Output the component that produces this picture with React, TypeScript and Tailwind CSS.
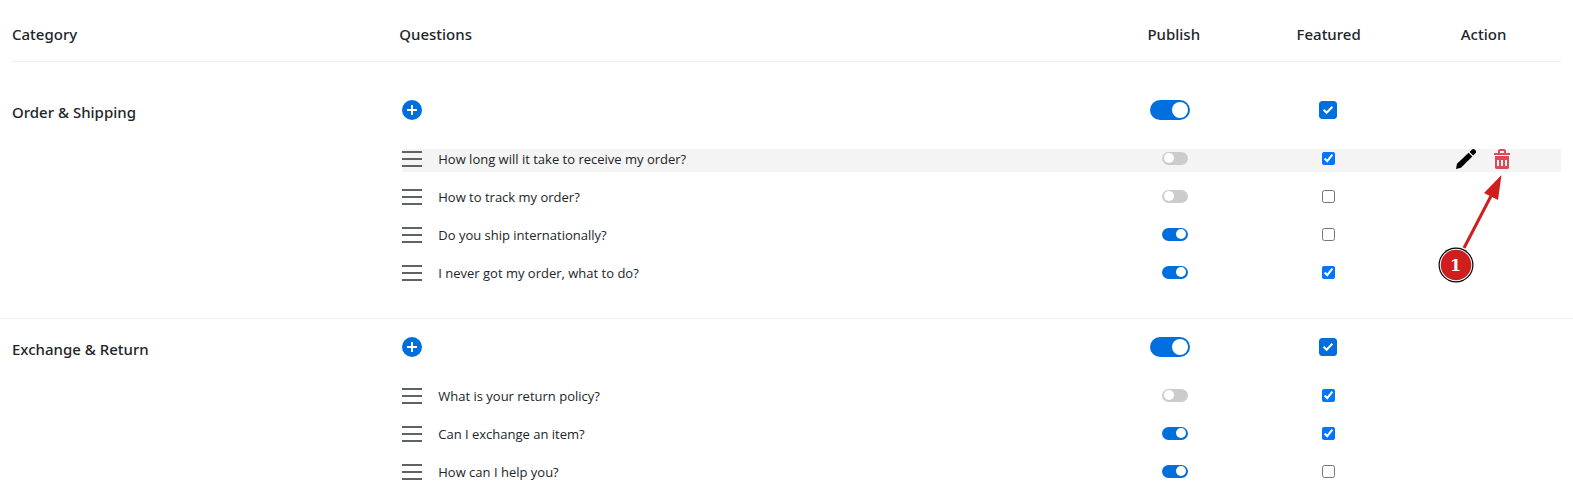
import { useState } from "react";
import clsx from "clsx";

interface Question {
  text: string;
  published: boolean;
  featured: boolean;
  active?: boolean;
}

interface Category {
  name: string;
  questions: Question[];
}

const categories: Category[] = [
  {
    name: "Order & Shipping",
    questions: [
      {
        text: "How long will it take to receive my order?",
        published: false,
        featured: true,
        active: true,
      },
      { text: "How to track my order?", published: false, featured: false },
      { text: "Do you ship internationally?", published: true, featured: false },
      {
        text: "I never got my order, what to do?",
        published: true,
        featured: true,
      },
    ],
  },
  {
    name: "Exchange & Return",
    questions: [
      { text: "What is your return policy?", published: false, featured: true },
      { text: "Can I exchange an item?", published: true, featured: true },
      { text: "How can I help you?", published: true, featured: false },
    ],
  },
];

function PlusIcon() {
  return (
    <svg viewBox="0 0 20 20" className="block h-5 w-5">
      <circle cx="10" cy="10" r="10" fill="#006fde" />
      <path d="M10 5v10M5 10h10" stroke="#fff" strokeWidth="2" />
    </svg>
  );
}

function DragIcon() {
  return (
    <svg viewBox="0 0 20 16" className="block h-4 w-5">
      <path
        d="M0 1h20M0 8h20M0 15h20"
        stroke="#5f6368"
        strokeWidth="2"
        fill="none"
      />
    </svg>
  );
}

function PencilIcon() {
  return (
    <svg viewBox="0 0 20 20" className="block h-5 w-5">
      <path d="M0 20l1-5.200L12.600 3.800l3.700 3.700L5 18.700z" />
      <path d="M13.600 2.900L15.800.7a2.200 2.200 0 0 1 3 0l.6.6a2 2 0 0 1 0 2.900l-2.200 2.200z" />
    </svg>
  );
}

function TrashIcon() {
  return (
    <svg viewBox="0 0 16 20" className="block h-5 w-4">
      <path
        fill="#dc4a56"
        fillRule="evenodd"
        d="M0 4h4V1.500L5.500 0h5L12 1.500V4h4v2H0zM6 2v2h4V2zM1 7h14v12l-1 1H2l-1-1zM3 11v6h2v-6zM7 11v6h2v-6zM11 11v6h2v-6z"
      />
    </svg>
  );
}

function Toggle({
  label,
  initial,
  large,
}: {
  label: string;
  initial: boolean;
  large?: boolean;
}) {
  const [on, setOn] = useState(initial);

  return (
    <button
      type="button"
      role="switch"
      aria-checked={on}
      aria-label={label}
      onClick={() => setOn(!on)}
      className={clsx(
        "flex shrink-0 rounded-full",
        large ? "h-5 w-10 px-0.5 pt-0.5" : "h-[13px] w-[26px] px-0.5 pt-px",
        on ? "justify-end bg-[#006fde]" : "justify-start bg-[#cccccc]",
      )}
    >
      <span
        className={clsx(
          "rounded-full bg-white",
          large ? "h-4 w-4" : "h-[10px] w-[10px]",
        )}
      />
    </button>
  );
}

function LargeCheckbox({ label }: { label: string }) {
  const [checked, setChecked] = useState(true);

  return (
    <span className="relative mt-px block h-[18px] w-[18px]">
      <input
        type="checkbox"
        aria-label={label}
        checked={checked}
        onChange={() => setChecked(!checked)}
        className="block h-[18px] w-[18px] appearance-none rounded-[3px] border border-[#006fde] checked:bg-[#006fde]"
      />
      {checked && (
        <svg
          viewBox="0 0 18 18"
          className="pointer-events-none absolute inset-0 h-[18px] w-[18px]"
        >
          <path
            d="M4.600 8.800l3 3 5.800-6"
            stroke="#fff"
            strokeWidth="2"
            fill="none"
          />
        </svg>
      )}
    </span>
  );
}

function StepMarker() {
  return (
    <div className="pointer-events-none absolute top-[25px] -left-[56px] h-[110px] w-[68px]">
      <svg viewBox="0 0 68 110" className="h-[110px] w-[68px]">
        <path d="M26 74L53 22" stroke="#d01e1e" strokeWidth="3" />
        <path d="M63.500 1L46 19l14 7z" fill="#d01e1e" />
        <circle cx="18" cy="91" r="17.500" fill="#000" />
        <circle cx="18" cy="91" r="16.300" fill="#fff" />
        <circle cx="18" cy="91" r="15.300" fill="#d01e1e" />
      </svg>
      <span className="absolute top-[74px] left-0 w-9 text-center font-['DejaVu_Serif',serif] text-base leading-9 font-bold text-white">
        1
      </span>
    </div>
  );
}

function QuestionRow({ question }: { question: Question }) {
  const [featured, setFeatured] = useState(question.featured);
  const cell = clsx("flex h-[23px]", question.active && "bg-[#f4f4f4]");

  return (
    <tr>
      <td />
      <td className="p-0 pb-[15px] pl-[3px]">
        <div className={clsx(cell, "items-center gap-4 pb-[3px]")}>
          <button type="button" aria-label="Reorder question">
            <DragIcon />
          </button>
          <span className="font-['Open_Sans',sans-serif] text-[13px] leading-5">
            {question.text}
          </span>
        </div>
      </td>
      <td className="p-0 pb-[15px]">
        <div className={clsx(cell, "justify-center pt-[3px] pl-0.5")}>
          <Toggle
            label={`Publish: ${question.text}`}
            initial={question.published}
          />
        </div>
      </td>
      <td className="p-0 pb-[15px]">
        <div className={clsx(cell, "justify-center pt-[3px]")}>
          <input
            type="checkbox"
            aria-label={`Featured: ${question.text}`}
            checked={featured}
            onChange={() => setFeatured(!featured)}
            className="h-[13px] w-[13px] accent-[#0075ff]"
          />
        </div>
      </td>
      <td className="p-0 pb-[15px]">
        <div
          className={clsx(cell, "items-start justify-center gap-[18px] pr-0.5")}
        >
          {question.active && (
            <>
              <button type="button" aria-label="Edit question">
                <PencilIcon />
              </button>
              <div className="relative">
                <button type="button" aria-label="Delete question">
                  <TrashIcon />
                </button>
                <StepMarker />
              </div>
            </>
          )}
        </div>
      </td>
    </tr>
  );
}

export default function App() {
  return (
    <main className="overflow-x-hidden bg-white px-3 font-['Noto_Sans','Open_Sans',sans-serif] text-[#212529]">
      <table className="w-full table-fixed border-collapse">
        <colgroup>
          <col className="w-[25%]" />
          <col className="w-[45%]" />
          <col className="w-[10%]" />
          <col className="w-[10%]" />
          <col className="w-[10%]" />
        </colgroup>
        <thead>
          <tr className="border-b border-[#efefef] text-[15px] leading-6">
            <th className="pt-[22px] pb-[15px] text-left font-medium">
              Category
            </th>
            <th className="pt-[22px] pb-[15px] text-left font-medium">
              Questions
            </th>
            <th className="pt-[22px] pb-[15px] font-medium">Publish</th>
            <th className="pt-[22px] pb-[15px] font-medium">Featured</th>
            <th className="pt-[22px] pb-[15px] font-medium">Action</th>
          </tr>
        </thead>
        {categories.map((category, index) => (
          <tbody key={category.name}>
            {/* Divider */}
            <tr>
              <td colSpan={5} className="p-0">
                {index === 0 ? (
                  <div className="h-5" />
                ) : (
                  <hr className="-mx-3 mt-[17px] border-[#efefef]" />
                )}
              </td>
            </tr>

            {/* Category */}
            <tr className="align-top">
              <th className="pt-[18px] pb-[25px] text-left text-[15px] leading-6 font-medium">
                {category.name}
              </th>
              <td className="pt-[18px] pl-[3px]">
                <button
                  type="button"
                  aria-label={`Add question to ${category.name}`}
                  className="block"
                >
                  <PlusIcon />
                </button>
              </td>
              <td className="pt-[18px]">
                <div className="flex justify-center pr-2">
                  <Toggle label={`Publish ${category.name}`} initial large />
                </div>
              </td>
              <td className="pt-[18px]">
                <div className="flex justify-center pr-0.5">
                  <LargeCheckbox label={`Feature ${category.name}`} />
                </div>
              </td>
              <td />
            </tr>

            {category.questions.map((question) => (
              <QuestionRow key={question.text} question={question} />
            ))}
          </tbody>
        ))}
      </table>
    </main>
  );
}
